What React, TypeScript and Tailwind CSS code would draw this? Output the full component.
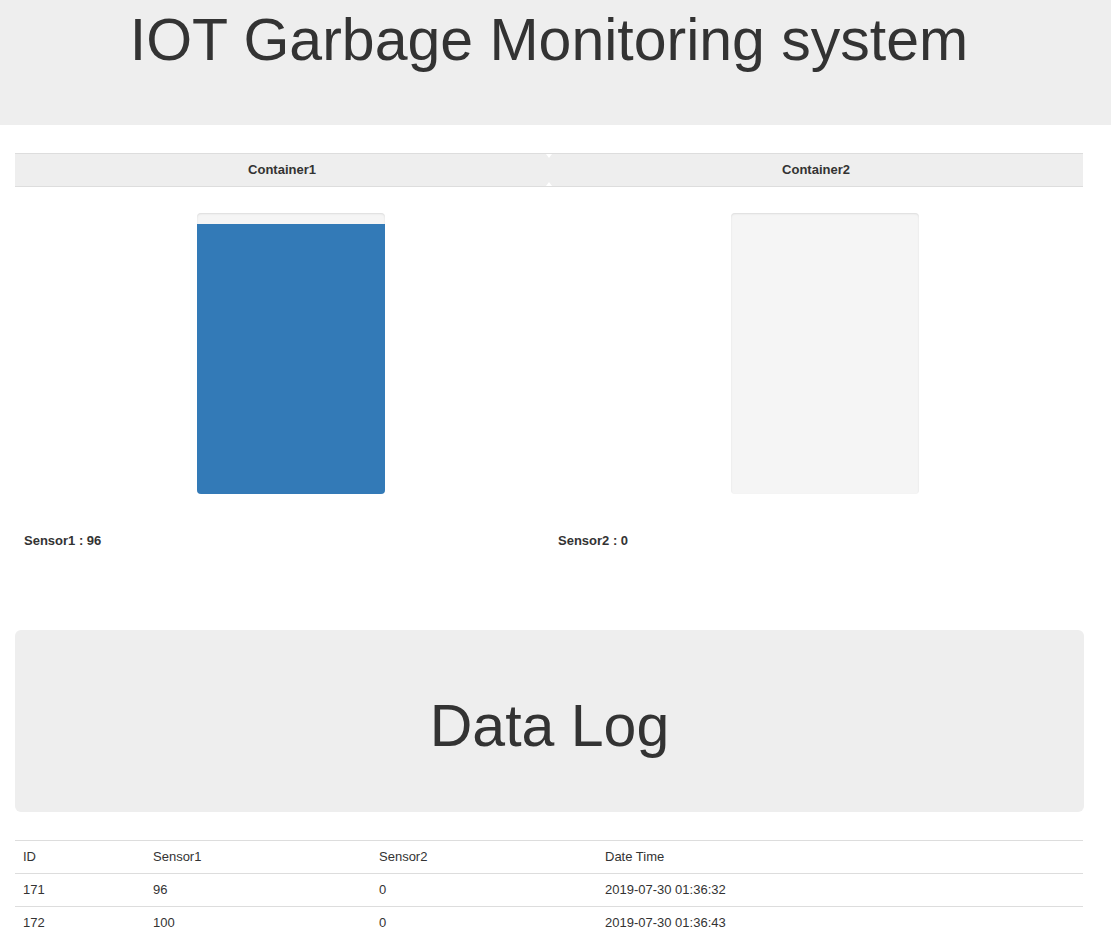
const rows = [
  { id: 171, s1: 96, s2: 0, time: "2019-07-30 01:36:32" },
  { id: 172, s1: 100, s2: 0, time: "2019-07-30 01:36:43" },
];

function Bin({ level }: { level: number }) {
  return (
    <div className="ml-[182px] mt-[26px] flex h-[281px] w-[188px] flex-col justify-end overflow-hidden rounded-[4px] bg-[#f5f5f5] shadow-[inset_0_1px_2px_rgba(0,0,0,0.1)]">
      <div className="w-full bg-[#337ab7]" style={{ height: `${level}%` }} />
    </div>
  );
}

export default function App() {
  return (
    <div className="min-h-[935px] bg-white font-['Liberation_Sans',Arial,sans-serif] text-[13px] text-[#333]">
      <header className="h-[125px] bg-[#eee] pr-[13px] pt-[8px] text-center">
        <h1 className="text-[59px] leading-[65px]">IOT Garbage Monitoring system</h1>
      </header>

      <div className="mx-[15px] mt-[28px] w-[1068px]">
        <div className="grid grid-cols-2 border-y border-[#ddd] bg-[#eee] font-bold">
          <div className="h-[32px] text-center leading-[32px]">Container1</div>
          <div className="relative h-[32px] text-center leading-[32px]">
            <span className="absolute -left-[3px] top-0 h-0 w-0 border-x-[3px] border-t-[4px] border-x-transparent border-t-white" />
            <span className="absolute -left-[3px] bottom-0 h-0 w-0 border-x-[3px] border-b-[4px] border-x-transparent border-b-white" />
            Container2
          </div>
        </div>
        <div className="grid grid-cols-2">
          <div>
            <Bin level={96} />
            <p className="mt-[37px] pl-[9px] font-bold">Sensor1 : 96</p>
          </div>
          <div>
            <Bin level={0} />
            <p className="mt-[37px] pl-[9px] font-bold">Sensor2 : 0</p>
          </div>
        </div>
      </div>

      <section className="mx-[15px] mt-[79px] h-[182px] w-[1069px] rounded-[6px] bg-[#eee] pt-[64px] text-center">
        <h2 className="text-[59px] leading-[65px]">Data Log</h2>
      </section>

      <table className="mx-[15px] mt-[28px] w-[1068px] border-collapse text-left">
        <thead>
          <tr className="h-[33px] border-y border-[#ddd]">
            <th className="w-[130px] pl-[8px] font-normal">ID</th>
            <th className="w-[226px] pl-[8px] font-normal">Sensor1</th>
            <th className="w-[226px] pl-[8px] font-normal">Sensor2</th>
            <th className="pl-[8px] font-normal">Date Time</th>
          </tr>
        </thead>
        <tbody>
          {rows.map((r) => (
            <tr key={r.id} className="h-[33px] border-b border-[#ddd]">
              <td className="pl-[8px]">{r.id}</td>
              <td className="pl-[8px]">{r.s1}</td>
              <td className="pl-[8px]">{r.s2}</td>
              <td className="pl-[8px]">{r.time}</td>
            </tr>
          ))}
        </tbody>
      </table>
    </div>
  );
}
